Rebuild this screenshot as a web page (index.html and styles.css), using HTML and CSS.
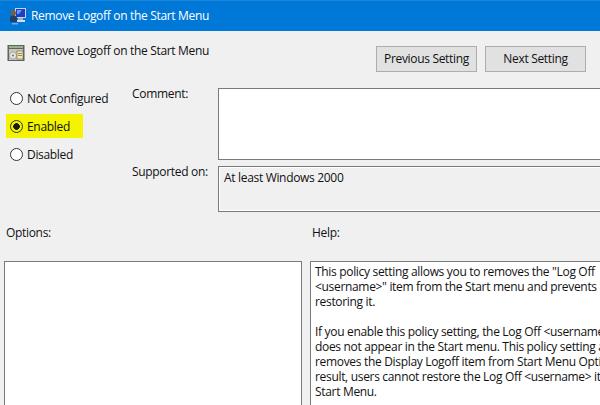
FILE: index.html
```html
<!DOCTYPE html>
<html lang="en">
<head>
<meta charset="utf-8">
<title>Remove Logoff on the Start Menu</title>
<link rel="stylesheet" href="styles.css">
</head>
<body>
<div class="window">
  <header class="titlebar">
    <svg class="title-icon" viewBox="0 0 18 18" width="18" height="18" aria-hidden="true">
      <rect x="6" y="1" width="11" height="10" fill="#c8d4e6"/>
      <rect x="7" y="2" width="9" height="8" fill="#1c3fc4"/>
      <path d="M8 3h5l-3 4H8z" fill="#5f9bf0"/>
      <rect x="9" y="11" width="5" height="2" fill="#9fb0c8"/>
      <rect x="7" y="13" width="9" height="2" fill="#d5dde8"/>
      <circle cx="4.500" cy="6" r="2.500" fill="#8a5a2a"/>
      <path d="M1 15V11q0-2.500 3.500-2.500T8 11v4z" fill="#23406a"/>
      <path d="M3 16h6v1.500H3z" fill="#7fa8d8"/>
    </svg>
    <span class="title-text">Remove Logoff on the Start Menu</span>
  </header>
  <main class="content">
    <div class="head-row">
      <svg class="policy-icon" viewBox="0 0 18 18" width="18" height="18" aria-hidden="true">
        <rect x="0.500" y="1" width="17" height="16" fill="#5c6468"/>
        <rect x="2" y="2" width="14" height="2" fill="#9bb08c"/>
        <rect x="2" y="5" width="14" height="11" fill="#c9c6b4"/>
        <circle cx="6" cy="11.500" r="3.500" fill="#e8e6e0" stroke="#8a8a80" stroke-width="0.600"/>
        <circle cx="6" cy="11.500" r="1" fill="#6c6c6c"/>
        <rect x="10" y="7" width="6" height="8" fill="#f2e8b0" stroke="#6a6448" stroke-width="0.600"/>
        <path d="M11 9.500h4M11 11.500h4" stroke="#6a6448" stroke-width="0.700"/>
      </svg>
      <span class="policy-name">Remove Logoff on the Start Menu</span>
      <div class="nav-buttons">
        <button class="btn" type="button">Previous Setting</button>
        <button class="btn" type="button">Next Setting</button>
      </div>
    </div>
    <div class="settings">
      <div class="radios">
        <label class="radio"><span class="dot"></span>Not Configured</label>
        <label class="radio selected"><span class="dot"></span>Enabled</label>
        <label class="radio"><span class="dot"></span>Disabled</label>
      </div>
      <div class="fields">
        <div class="field-label">Comment:</div>
        <div class="comment-box"></div>
        <div class="field-label">Supported on:</div>
        <div class="supported-box">At least Windows 2000</div>
      </div>
    </div>
    <div class="panes">
      <div class="pane options-pane">
        <div class="pane-label">Options:</div>
        <div class="pane-box"></div>
      </div>
      <div class="pane help-pane">
        <div class="pane-label">Help:</div>
        <div class="pane-box help-text">
          <p>This policy setting allows you to removes the "Log Off<br>&lt;username&gt;" item from the Start menu and prevents users from<br>restoring it.</p>
          <p>If you enable this policy setting, the Log Off &lt;username&gt; item<br>does not appear in the Start menu. This policy setting also<br>removes the Display Logoff item from Start Menu Options. As a<br>result, users cannot restore the Log Off &lt;username&gt; item to the<br>Start Menu.</p>
        </div>
      </div>
    </div>
  </main>
</div>
</body>
</html>
```
FILE: styles.css
```css
* { box-sizing: border-box; }
html, body { margin: 0; padding: 0; }
body { width: 600px; height: 405px; overflow: hidden; background: #f0f0f0; }
.window {
  width: 600px; height: 405px; overflow: hidden;
  display: flex; flex-direction: column;
  font-family: "Open Sans", "Noto Sans", sans-serif;
  font-size: 12px; line-height: 15px; color: #111;
  letter-spacing: -0.32px;
  background: #f0f0f0;
}
.titlebar {
  flex: none; height: 31px; background: #0078d7; color: #fff;
  border-top: 1px solid #1a86dc;
  display: flex; align-items: center; padding-left: 9px; gap: 4px;
}
.title-icon { flex: none; }
.title-text { margin-bottom: 2px; }
.content { flex: 1; display: flex; flex-direction: column; min-height: 0; }
.head-row { flex: none; height: 41px; display: flex; align-items: flex-start; padding: 13px 14px 0 7px; }
.policy-icon { flex: none; }
.policy-name { margin-left: 6px; margin-top: -1px; }
.nav-buttons { margin-left: auto; display: flex; gap: 8px; margin-top: 2px; }
.btn {
  width: 101px; height: 26px; padding: 0 0 2px; border: 1px solid #adadad; background: #e1e1e1;
  font: inherit; color: inherit; letter-spacing: inherit;
}
.settings { flex: none; height: 139px; display: flex; }
.radios { flex: none; width: 132px; padding-left: 6px; display: flex; flex-direction: column; margin-top: 14px; }
.radio { display: flex; align-items: center; height: 24px; width: 77px; padding-left: 4px; margin-bottom: 4px; white-space: nowrap; }
.radio.selected { background: #f4f400; }
.dot {
  flex: none; width: 13px; height: 13px; border-radius: 50%; border: 1px solid #333;
  background: #fff; margin-right: 4px;
}
.selected .dot { background: radial-gradient(circle, #1a1a1a 0 3px, transparent 3.6px); }
.fields { flex: 1; display: grid; grid-template-columns: 86px 1fr; grid-template-rows: 72px 46px; row-gap: 6px; margin-top: 16px; }
.field-label { margin-top: -2px; }
.comment-box { background: #fff; border: 1px solid #7a7a7a; border-right: 0; }
.supported-box {
  background: #f0f0f0; border: 1px solid #7a7a7a; border-right: 0;
  box-shadow: inset 0 -1px 0 #fff, inset 1px 1px 0 #fff;
  padding: 3px 5px;
}
.panes { flex: 1; display: flex; min-height: 0; padding-top: 14px; }
.pane { display: flex; flex-direction: column; min-width: 0; }
.options-pane { width: 310px; flex: none; padding-left: 4px; }
.help-pane { flex: 1; }
.pane-label { flex: none; height: 36px; padding-left: 2px; }
.options-pane .pane-box { width: 298px; }
.pane-box { flex: 1; background: #fff; border: 1px solid #7a7a7a; border-bottom: 0; }
.help-pane .pane-box { border-right: 0; }
.help-text { padding: 2px 0 0 4px; white-space: nowrap; overflow: hidden; }
.help-text p { margin: 0 0 15px; }
```
